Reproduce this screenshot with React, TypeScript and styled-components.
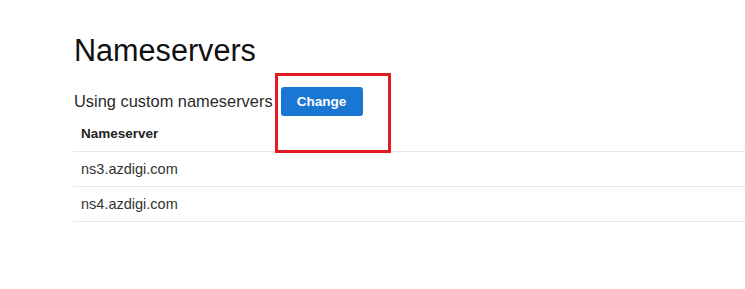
import React from "react";
import styled, { createGlobalStyle } from "styled-components";

const Global = createGlobalStyle`
  html, body { margin: 0; padding: 0; background: #fff; }
  body { font-family: "Liberation Sans", Arial, sans-serif; }
`;

const Page = styled.div`
  padding: 32px 0 0 73px;
  width: 672px;
`;

const Title = styled.h1`
  margin: 0 0 0 1px;
  font-size: 30.6px;
  line-height: 36px;
  font-weight: 400;
  color: #111;
`;

const StatusRow = styled.div`
  display: flex;
  align-items: center;
  gap: 8px;
  margin-top: 19px;
  padding-left: 1px;
`;

const StatusText = styled.span`
  font-size: 16.4px;
  color: #2b2b2b;
`;

const ButtonWrap = styled.div`
  position: relative;
`;

const Button = styled.button`
  display: block;
  width: 82px;
  height: 29px;
  border: none;
  border-radius: 3px;
  background: #1976d2;
  color: #fff;
  font-family: "Liberation Sans", Arial, sans-serif;
  font-weight: 700;
  font-size: 13.5px;
  padding: 0;
  cursor: pointer;
`;

const Highlight = styled.div`
  position: absolute;
  left: -6px;
  top: -14px;
  width: 116px;
  height: 80px;
  box-sizing: border-box;
  border: 3px solid #e31b23;
  pointer-events: none;
`;

const Table = styled.div`
  display: flex;
  flex-direction: column;
`;

const Row = styled.div<{ $header?: boolean }>`
  display: flex;
  align-items: center;
  height: ${(p) => (p.$header ? "35px" : "34px")};
  padding-left: 8px;
  border-bottom: 1px solid #e8e8e8;
  font-size: ${(p) => (p.$header ? "13.5px" : "14.5px")};
  font-weight: ${(p) => (p.$header ? 700 : 400)};
  color: ${(p) => (p.$header ? "#222" : "#333")};
`;

export default function App() {
  const servers = ["ns3.azdigi.com", "ns4.azdigi.com"];
  return (
    <>
      <Global />
      <Page>
        <Title>Nameservers</Title>
        <StatusRow>
          <StatusText>Using custom nameservers</StatusText>
          <ButtonWrap>
            <Button>Change</Button>
            <Highlight />
          </ButtonWrap>
        </StatusRow>
        <Table>
          <Row $header>Nameserver</Row>
          {servers.map((s) => (
            <Row key={s}>{s}</Row>
          ))}
        </Table>
      </Page>
    </>
  );
}
